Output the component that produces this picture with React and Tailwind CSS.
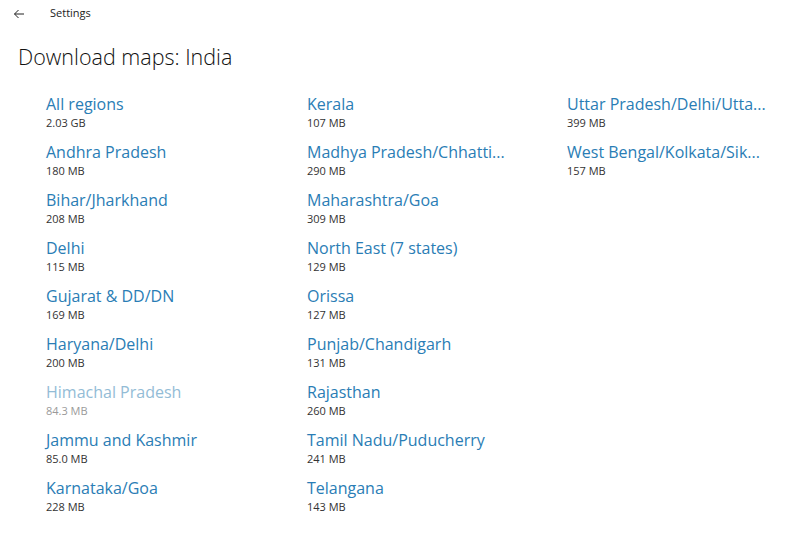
const columns = [
  [
    { name: "All regions", size: "2.03 GB" },
    { name: "Andhra Pradesh", size: "180 MB" },
    { name: "Bihar/Jharkhand", size: "208 MB" },
    { name: "Delhi", size: "115 MB" },
    { name: "Gujarat & DD/DN", size: "169 MB" },
    { name: "Haryana/Delhi", size: "200 MB" },
    { name: "Himachal Pradesh", size: "84.3 MB", disabled: true },
    { name: "Jammu and Kashmir", size: "85.0 MB" },
    { name: "Karnataka/Goa", size: "228 MB" },
  ],
  [
    { name: "Kerala", size: "107 MB" },
    { name: "Madhya Pradesh/Chhatti...", size: "290 MB" },
    { name: "Maharashtra/Goa", size: "309 MB" },
    { name: "North East (7 states)", size: "129 MB" },
    { name: "Orissa", size: "127 MB" },
    { name: "Punjab/Chandigarh", size: "131 MB" },
    { name: "Rajasthan", size: "260 MB" },
    { name: "Tamil Nadu/Puducherry", size: "241 MB" },
    { name: "Telangana", size: "143 MB" },
  ],
  [
    { name: "Uttar Pradesh/Delhi/Utta...", size: "399 MB" },
    { name: "West Bengal/Kolkata/Sik...", size: "157 MB" },
  ],
];

const Region = ({ region }) => (
  <div className="h-[48px] pt-[2px]">
    <p
      className={`text-[16px] leading-[20px] whitespace-nowrap ${
        region.disabled ? "text-[#93bcd6]" : "text-[#2a7db5]"
      }`}
    >
      {region.name}
    </p>
    <p
      className={`mt-[1px] text-[11px] leading-[16px] ${
        region.disabled ? "text-[#9a9a9a]" : "text-[#333333]"
      }`}
    >
      {region.size}
    </p>
  </div>
);

export default function App() {
  return (
    <div
      className="w-[800px] h-[547px] bg-white overflow-hidden"
      style={{ fontFamily: '"Open Sans", "Noto Sans", sans-serif' }}
    >
      {/* Title bar */}
      <div className="flex items-center h-[27px] pl-[13px]">
        <svg width="12" height="12" viewBox="0 0 12 12" className="text-[#222]">
          <path
            d="M11 6H1.5M5.5 2L1.5 6l4 4"
            fill="none"
            stroke="currentColor"
            strokeWidth="1"
          />
        </svg>
        <span className="ml-[25px] text-[11px] text-[#222]">Settings</span>
      </div>

      {/* Page heading */}
      <h1 className="mt-[14px] ml-[18px] text-[21.5px] leading-[32px] font-light text-[#111]">
        Download maps: India
      </h1>

      {/* Regions */}
      <div className="mt-[19px] ml-[46px] grid grid-cols-[261px_260px_200px]">
        {columns.map((col, i) => (
          <div key={i}>
            {col.map((region) => (
              <Region key={region.name} region={region} />
            ))}
          </div>
        ))}
      </div>
    </div>
  );
}
